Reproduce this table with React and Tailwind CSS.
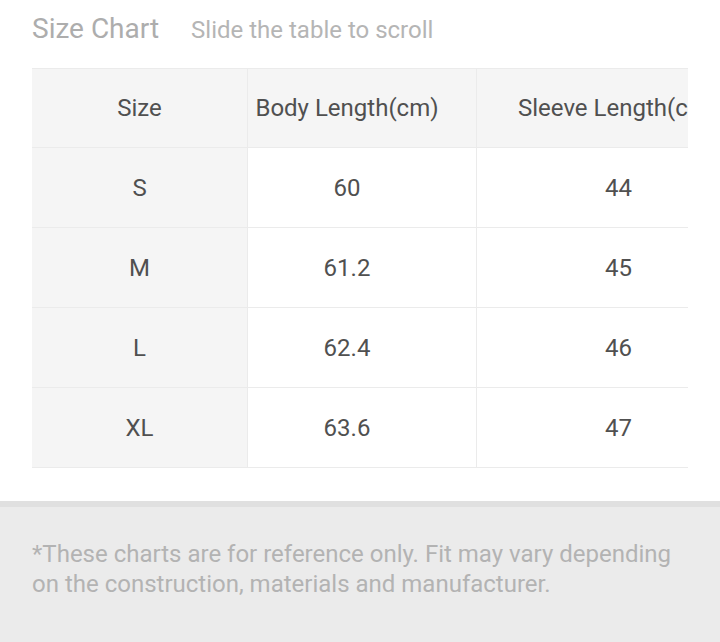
import React from "react";

const rows = [
  { size: "S", body: "60", sleeve: "44" },
  { size: "M", body: "61.2", sleeve: "45" },
  { size: "L", body: "62.4", sleeve: "46" },
  { size: "XL", body: "63.6", sleeve: "47" },
];

const App = () => {
  return (
    <div className="w-[720px] h-[642px] bg-white overflow-hidden flex flex-col font-['Roboto',sans-serif]">
      <div className="flex items-baseline px-[32px] pt-[10px] h-[68px]">
        <h2 className="text-[28px] leading-[38px] text-[#adadad]">Size Chart</h2>
        <span className="ml-[32px] text-[24px] leading-[38px] text-[#b5b5b5]">Slide the table to scroll</span>
      </div>

      <div className="ml-[32px] w-[656px] overflow-hidden">
        <div className="w-[760px] text-[24px] text-[#505050]">
          <div className="flex h-[80px] bg-[#f5f5f5] border-y border-[#ebebeb]">
            <div className="w-[215px] flex items-center justify-center">Size</div>
            <div className="w-[229px] flex items-center justify-center pr-[30px] border-l border-[#ebebeb]">Body Length(cm)</div>
            <div className="w-[316px] flex items-center pl-[41px] border-l border-[#ebebeb] whitespace-nowrap">Sleeve Length(cm)</div>
          </div>
          {rows.map((r) => (
            <div key={r.size} className="flex h-[80px] border-b border-[#ebebeb]">
              <div className="w-[215px] bg-[#f5f5f5] flex items-center justify-center">{r.size}</div>
              <div className="w-[229px] flex items-center justify-center pr-[30px] border-l border-[#ebebeb]">{r.body}</div>
              <div className="w-[316px] flex items-center justify-center pr-[32px] border-l border-[#ebebeb]">{r.sleeve}</div>
            </div>
          ))}
        </div>
      </div>

      <div className="mt-[33px] flex-1 bg-[#ebebeb] border-t-[6px] border-[#e0e0e0]">
        <p className="px-[32px] pt-[32px] text-[24px] leading-[30px] text-[#b3b3b3]">
          *These charts are for reference only. Fit may vary depending on the construction, materials and manufacturer.
        </p>
      </div>
    </div>
  );
};

export default App;
